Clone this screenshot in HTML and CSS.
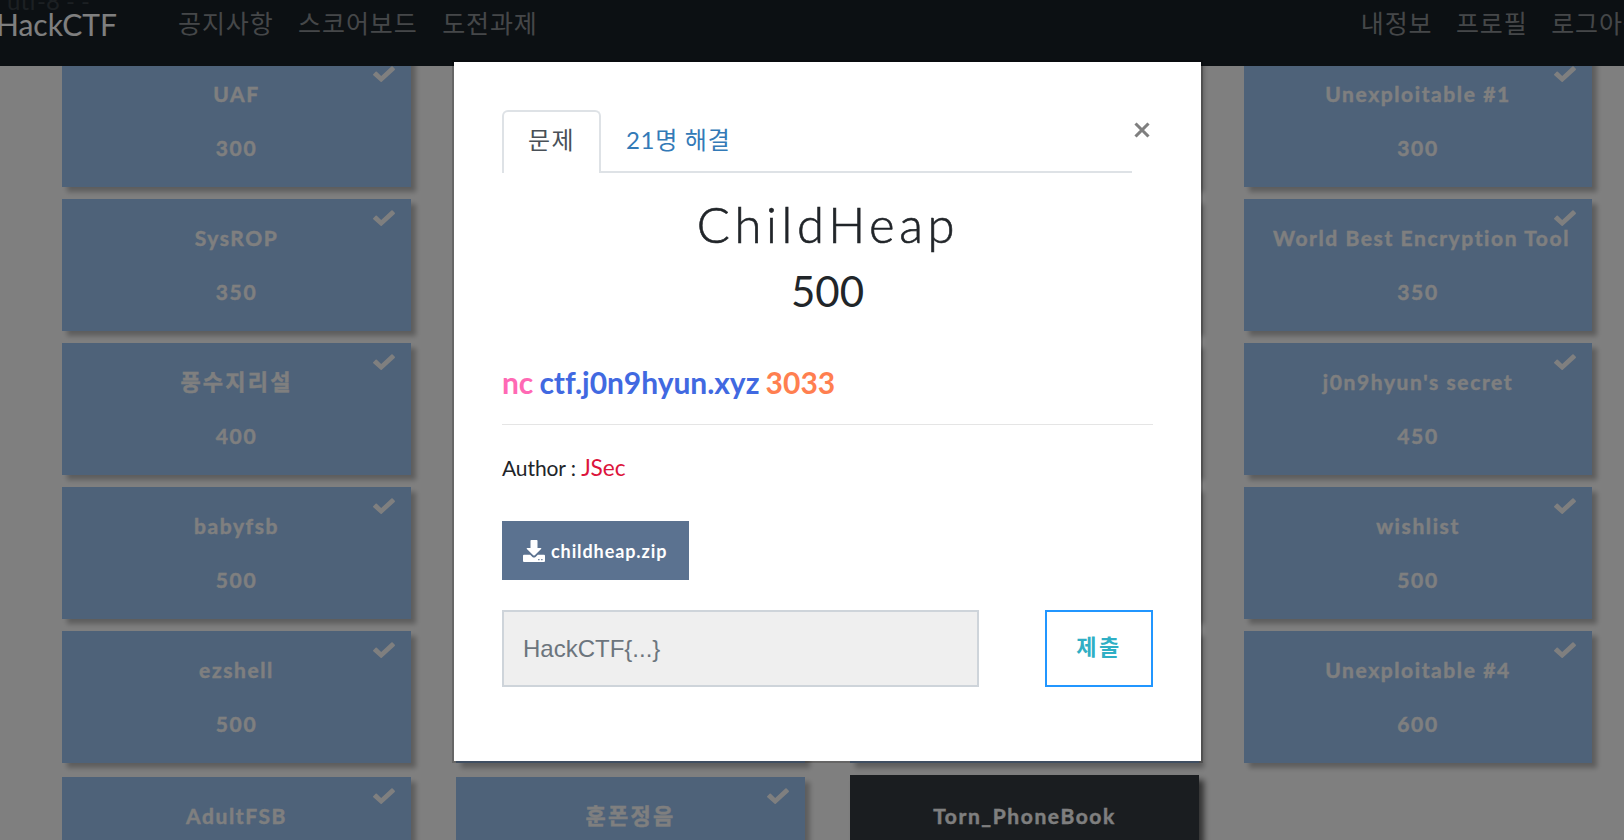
FILE: index.html
```html
<!DOCTYPE html>
<html lang="ko">
<head>
<meta charset="utf-8">
<title>HackCTF</title>
<link rel="stylesheet" href="styles.css">
</head>
<body>
<svg class="defs" width="0" height="0" aria-hidden="true">
  <symbol id="check" viewBox="0 0 22 16"><path d="M0 8.600 2.600 5.800Q3.200 5.300 3.800 5.800L8.200 9.900 18.400.500Q19 0 19.600.500L21.800 2.700Q22.200 3.300 21.700 3.900L8.800 15.700Q8.200 16.200 7.600 15.700L.300 9.300Q0 9 0 8.600z" fill="currentColor"/></symbol>
</svg>
<nav class="navbar">
  <span class="stray">utf-8 - -</span>
  <a class="brand">HackCTF</a>
  <div class="links">
    <a>공지사항</a><a>스코어보드</a><a>도전과제</a>
  </div>
  <div class="links links-right">
    <a>내정보</a><a>프로필</a><a>로그아웃</a>
  </div>
</nav>
<main class="board">
  <div class="card"><svg class="tick"><use href="#check"/></svg><p>UAF</p><p>300</p></div>
  <div class="card"></div><div class="card"></div>
  <div class="card"><svg class="tick"><use href="#check"/></svg><p>Unexploitable #1</p><p>300</p></div>

  <div class="card"><svg class="tick"><use href="#check"/></svg><p>SysROP</p><p>350</p></div>
  <div class="card"></div><div class="card"></div>
  <div class="card"><svg class="tick"><use href="#check"/></svg><p>World Best Encryption Tool</p><p>350</p></div>

  <div class="card"><svg class="tick"><use href="#check"/></svg><p class="ko">풍수지리설</p><p>400</p></div>
  <div class="card"></div><div class="card"></div>
  <div class="card"><svg class="tick"><use href="#check"/></svg><p>j0n9hyun's secret</p><p>450</p></div>

  <div class="card"><svg class="tick"><use href="#check"/></svg><p>babyfsb</p><p>500</p></div>
  <div class="card"></div><div class="card"></div>
  <div class="card"><svg class="tick"><use href="#check"/></svg><p>wishlist</p><p>500</p></div>

  <div class="card"><svg class="tick"><use href="#check"/></svg><p>ezshell</p><p>500</p></div>
  <div class="card"></div><div class="card"></div>
  <div class="card"><svg class="tick"><use href="#check"/></svg><p>Unexploitable #4</p><p>600</p></div>

  <div class="card last"><svg class="tick"><use href="#check"/></svg><p>AdultFSB</p></div>
  <div class="card last"><svg class="tick"><use href="#check"/></svg><p class="ko">훈폰정음</p></div>
  <div class="card unsolved"><p>Torn_PhoneBook</p></div>
</main>
<div class="backdrop"></div>
<section class="modal">
  <header class="head">
    <div class="tabs">
      <a class="tab active">문제</a>
      <a class="tab">21명 해결</a>
    </div>
    <svg class="close" viewBox="0 0 16 16"><path d="M1.500 1.500 14.500 14.500M14.500 1.500 1.500 14.500" fill="none" stroke="#7f7f7f" stroke-width="3.100"/></svg>
  </header>
  <h2 class="name">ChildHeap</h2>
  <h3 class="value">500</h3>
  <p class="conn"><span class="pink">nc</span> <span class="blue">ctf.j0n9hyun.xyz</span> <span class="coral">3033</span></p>
  <hr class="rule">
  <p class="author">Author : <span class="who">JSec</span></p>
  <a class="file"><svg class="dl" viewBox="0 0 22 22"><path fill="#fff" d="M8.3 0h5.4q.8 0 .8.8V8h3.2q1.200 0 .4.900l-6.300 6.300q-.8.800-1.600 0L3.900 8.900Q3.100 8 4.300 8h3.200V.800Q7.500 0 8.300 0z"/><path fill="#fff" d="M1 14.700h6.200l2.200 2.200q1.600 1.400 3.200 0l2.200-2.200H21q1 0 1 1V21q0 1-1 1H1q-1 0-1-1v-5.300q0-1 1-1z"/><path fill="#5b7290" d="M15.200 19h1.300v1.200h-1.300zM18.200 19h1.300v1.200h-1.300z"/></svg><span>childheap.zip</span></a>
  <div class="row">
    <div class="field">HackCTF{...}</div>
    <a class="submit">제출</a>
  </div>
</section>
</body>
</html>
```
FILE: styles.css
```css
* { box-sizing: border-box; }
html, body { margin: 0; height: 840px; overflow: hidden; }
body { background: #fff; font-family: Lato, "Noto Sans CJK KR", sans-serif; font-variant-ligatures: none; color: #212529; }
p, h2, h3 { margin: 0; }
.defs { position: absolute; }

.navbar {
  position: fixed; top: 0; left: 0; z-index: 2;
  width: 1624px; height: 66px; overflow: hidden;
  display: flex; align-items: flex-start;
  background: #182026;
}
.stray { position: absolute; left: 7px; top: -15px; font-size: 24px; line-height: 32px; color: #384046; }
.brand { flex: none; margin-left: -4px; width: 182px; font-size: 30px; line-height: 48px; color: #fff; white-space: nowrap; }
.links { flex: none; display: flex; gap: 24.500px; font-size: 25px; line-height: 46px; letter-spacing: .9px; color: #8b8f92; white-space: nowrap; }
.links-right { margin-left: 823px; gap: 23.500px; }

.board {
  height: 840px; overflow: hidden;
  display: grid; grid-template-columns: 349px 349px 349px 348px;
  grid-auto-rows: 132px; gap: 12px 45px;
  padding: 55px 0 0 62px;
}
.card {
  position: relative; padding: 25px 29px 0; text-align: center;
  background: #9dc4f2; color: #fff;
  font-weight: 700; font-size: 21px; line-height: 27px; letter-spacing: 1.6px;
  -webkit-text-stroke: .4px #fff;
  white-space: nowrap; box-shadow: 5px 5px 5px rgba(0, 0, 0, .27);
}
.card p + p { margin-top: 27px; }
.card .ko { font-size: 22px; letter-spacing: 2.200px; }
.card.last { margin-top: 2px; }
.card.unsolved { margin-top: 0; background: #343a40; padding-top: 27px; box-shadow: 5px 5px 6px rgba(0, 0, 0, .6); }
.tick { position: absolute; right: 16px; top: 11px; width: 22px; height: 16px; }

.backdrop { position: fixed; inset: 0; z-index: 3; background: rgba(0, 0, 0, .5); }

.modal {
  position: fixed; left: 452px; top: 60px; z-index: 4;
  width: 751px; height: 703px; padding: 48px 48px 0 48px;
  background: #fff; background-clip: padding-box;
  border: 2px solid rgba(0, 0, 0, .2);
}
.head { display: flex; align-items: flex-start; height: 63px; }
.tabs { flex: none; display: flex; width: 630px; height: 63px; border-bottom: 2px solid #dee2e6; }
.tab { height: 63px; padding: 0 25px; line-height: 60px; font-size: 24px; letter-spacing: .700px; color: #337ab7; white-space: nowrap; }
.tab.active { width: 99px; padding: 0 0 0 24px; letter-spacing: 1.500px; color: #495057; background: #fff; border: 2px solid #dee2e6; border-bottom: 0; border-radius: 6px 6px 0 0; line-height: 56px; }
.close { flex: none; width: 16px; height: 16px; margin: 12px 0 0 2px; }
.name { margin-top: 20px; text-align: center; font-size: 49px; font-weight: 300; line-height: 62px; letter-spacing: 4.600px; text-indent: 1px; -webkit-text-stroke: .6px #212529; white-space: nowrap; }
.value { margin-top: 8px; text-align: center; font-size: 42px; font-weight: 400; line-height: 56px; }
.conn { margin-top: 43px; font-size: 30px; font-weight: 700; line-height: 40px; letter-spacing: -.1px; white-space: nowrap; }
.pink { color: #ff69b4; }
.blue { color: #4169e1; margin-left: -1px; letter-spacing: -.05px; }
.coral { color: #ff7f50; margin-left: -1px; letter-spacing: 0; }
.rule { margin: 22px 0 0; border: 0; height: 1px; background: #e5e5e5; }
.author { margin-top: 27px; font-size: 21px; line-height: 32px; letter-spacing: -.1px; white-space: nowrap; }
.who { font-size: 22.700px; color: #dc143c; }
.file { display: flex; align-items: center; width: 187px; height: 59px; margin-top: 37px; padding-left: 21px; background: #5b7290; color: #fff; font-size: 18px; font-weight: 700; letter-spacing: .9px; }
.dl { width: 22px; height: 22px; margin-right: 6px; }
.row { display: flex; justify-content: space-between; margin-top: 30px; }
.field { width: 477px; height: 77px; padding-left: 19px; border: 2px solid #ced4da; background: #efefef; font: 24px/74px "Liberation Sans", sans-serif; color: #6c757d; }
.submit { width: 108px; height: 77px; border: 2px solid #2196ff; text-align: center; font-weight: 700; font-size: 22px; line-height: 70px; letter-spacing: 2.500px; color: #2fafc5; }
```
